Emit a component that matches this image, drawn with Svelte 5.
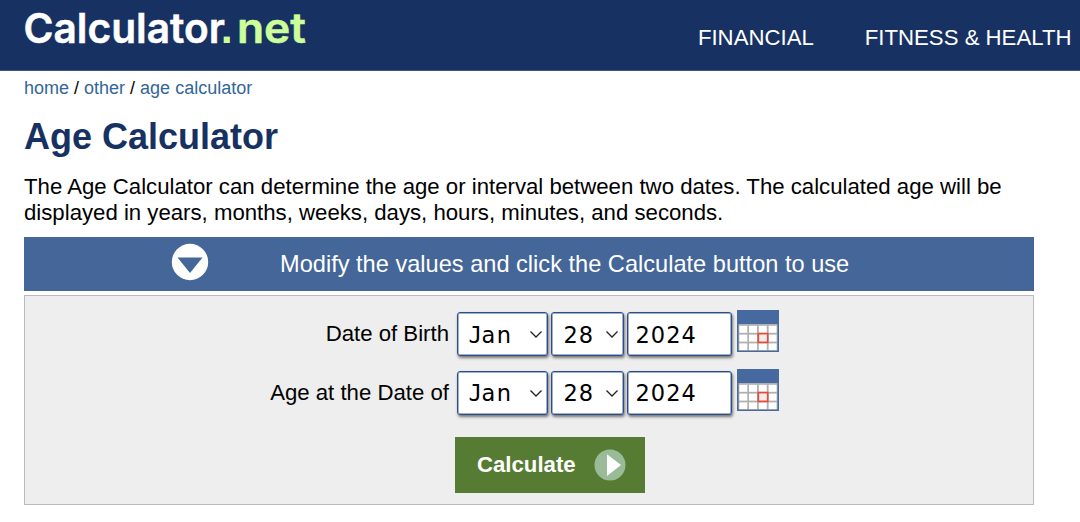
<script>
  const months = ['Jan', 'Feb', 'Mar', 'Apr', 'May', 'Jun', 'Jul', 'Aug', 'Sep', 'Oct', 'Nov', 'Dec'];
  const rows = $state([
    { label: 'Date of Birth', month: 0, day: 28, year: '2024' },
    { label: 'Age at the Date of', month: 0, day: 28, year: '2024' }
  ]);
</script>

<header>
  <svg class="logo" width="290" height="60" viewBox="0 0 290 60" role="img" aria-label="Calculator.net">
    <text x="-0.5" y="42.7" textLength="201.5" lengthAdjust="spacingAndGlyphs" fill="#fff" stroke="#fff" stroke-width="0.5">Calculator</text>
    <text class="dot" x="196.7" y="42.7" fill="#cf9">.</text>
    <text x="213" y="42.7" textLength="69" lengthAdjust="spacingAndGlyphs" fill="#cf9" stroke="#cf9" stroke-width="0.5">net</text>
  </svg>
  <nav>
    <span>FINANCIAL</span>
    <span>FITNESS &amp; HEALTH</span>
  </nav>
</header>

<main>
  <div class="crumbs"><a href="#home">home</a> / <a href="#other">other</a> / <a href="#age">age calculator</a></div>
  <h1>Age Calculator</h1>
  <p>The Age Calculator can determine the age or interval between two dates. The calculated age will be<br />displayed in years, months, weeks, days, hours, minutes, and seconds.</p>

  <div class="banner">
    <svg width="38" height="38" viewBox="0 0 38 38">
      <circle cx="19" cy="19" r="18.2" fill="#fff" />
      <path d="M6.5 14.5H31.5L19 30Z" fill="#446699" />
    </svg>
    <span>Modify the values and click the Calculate button to use</span>
  </div>

  <section class="panel">
    {#each rows as row}
      <div class="row">
        <span class="label">{row.label}</span>
        <div class="field month">
          <span><span class="initial">{months[row.month][0]}</span>{months[row.month].slice(1)}</span>
          <svg width="14" height="9" viewBox="0 0 14 9"><path d="M1.5 1.5L7 7L12.5 1.5" /></svg>
        </div>
        <div class="field day">
          <span>{row.day}</span>
          <svg width="14" height="9" viewBox="0 0 14 9"><path d="M1.5 1.5L7 7L12.5 1.5" /></svg>
        </div>
        <div class="field year"><span>{row.year}</span></div>
        <svg class="calendar" width="42" height="42" viewBox="0 0 42 42">
          <rect width="42" height="42" fill="#466a9f" />
          <rect x="1.5" y="14" width="39" height="26.6" fill="#b0b0b0" />
          {#each [2.3, 12, 21.8, 31.6] as x}
            {#each [15.8, 24.6, 33.4] as y}
              <rect {x} {y} width="8" height={y > 30 ? 6.7 : 7} fill="#fff" />
            {/each}
          {/each}
          <rect x="21.3" y="23.6" width="9.4" height="8.8" fill="#eee" stroke="#e54b35" stroke-width="1.7" />
        </svg>
      </div>
    {/each}
    <button>
      <span>Calculate</span>
      <svg width="32" height="32" viewBox="0 0 32 32">
        <circle cx="16" cy="16" r="15.5" fill="#9abb98" />
        <path d="M13 5.2L27 16L13 27Z" fill="#fff" />
      </svg>
    </button>
  </section>
</main>

<style>
  :global(body) {
    background: #fff;
    overflow: hidden;
  }
  header,
  main {
    font-family: 'Liberation Sans', Arial, sans-serif;
    font-size: 22.2px;
    box-sizing: border-box;
  }
  header {
    height: 71px;
    background: #173262;
    border-bottom: 1px solid #405680;
    display: flex;
    justify-content: space-between;
    padding: 0 8.5px 0 24px;
    color: #fff;
  }
  .logo {
    font-family: Inter, sans-serif;
    font-weight: 600;
    font-size: 41px;
    display: block;
  }
  .dot {
    font-family: 'Liberation Sans', Arial, sans-serif;
    font-weight: 700;
    font-size: 43px;
  }
  nav {
    display: flex;
    gap: 51px;
    padding-top: 25px;
    line-height: 26px;
    white-space: nowrap;
  }
  main {
    padding: 7px 46px 0 24px;
  }
  .crumbs {
    font-size: 18px;
    line-height: 21px;
  }
  a {
    color: #336699;
    text-decoration: none;
  }
  h1 {
    margin: 17px 0 16px;
    font-size: 36px;
    line-height: 42px;
    color: #173262;
  }
  p {
    margin: 0;
    line-height: 26px;
    white-space: nowrap;
  }
  .banner {
    display: flex;
    align-items: center;
    height: 54px;
    margin-top: 11px;
    padding-left: 147px;
    background: #446699;
    color: #fff;
    font-size: 23.6px;
  }
  .banner svg {
    margin: 0 71px 4px 0;
  }
  .panel {
    box-sizing: border-box;
    height: 210px;
    margin-top: 4px;
    padding-top: 14px;
    border: 1px solid #bbb;
    background: #eee;
  }
  .row {
    display: flex;
    height: 44px;
    margin-bottom: 14.5px;
  }
  .label {
    width: 424px;
    margin-right: 8px;
    text-align: right;
    line-height: 48px;
  }
  .field {
    box-sizing: border-box;
    height: 44px;
    margin: 2px 3px 0 0;
    padding: 1px 4px 0 11.5px;
    display: flex;
    align-items: center;
    justify-content: space-between;
    border: 1px solid #2d4d88;
    border-radius: 3px;
    background: #fff;
    box-shadow:
      inset 0 0 0 1px #9fb0cd,
      1px 2px 3px rgba(0, 0, 0, 0.5);
    font-family: 'DejaVu Sans', Verdana, sans-serif;
    font-size: 22.5px;
    letter-spacing: 1px;
  }
  .field path {
    fill: none;
    stroke: #222;
    stroke-width: 1.3;
  }
  .month {
    width: 91px;
    padding-left: 10.5px;
    letter-spacing: 1.3px;
  }
  .initial {
    font-family: 'DejaVu Sans Mono', monospace;
    letter-spacing: -0.5px;
  }
  .day {
    width: 73px;
  }
  .year {
    width: 105px;
    margin-right: 5px;
    padding-left: 7.5px;
  }
  .calendar {
    display: block;
  }
  button {
    display: flex;
    align-items: center;
    justify-content: space-between;
    width: 190px;
    height: 56px;
    margin: 24px 0 0 430px;
    padding: 0 19px 0 22px;
    border: 0;
    background: #567c33;
    color: #fff;
    font: bold 22.2px 'Liberation Sans', Arial, sans-serif;
  }
</style>
